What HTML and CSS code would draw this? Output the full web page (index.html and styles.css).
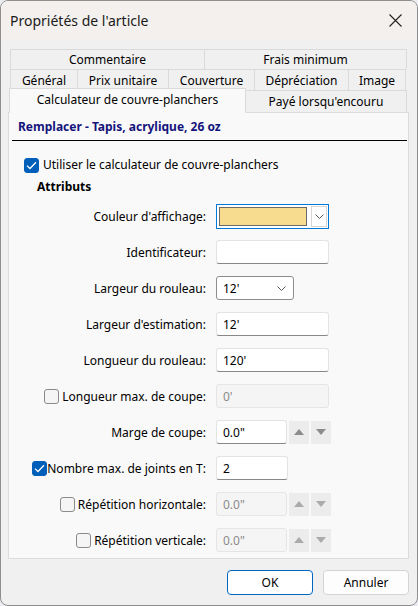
FILE: index.html
```html
<!DOCTYPE html>
<html lang="fr">
<head>
<meta charset="utf-8">
<title>Propriétés de l'article</title>
<link rel="stylesheet" href="styles.css">
</head>
<body>
<div class="window">
  <div class="titlebar">
    <span class="title">Propriétés de l'article</span>
    <svg class="close" width="13" height="13" viewBox="0 0 13 13"><path d="M0.5 0.5L12.5 12.5M12.5 0.5L0.5 12.5" stroke="#222" stroke-width="1.1" fill="none"/></svg>
  </div>
  <div class="content">
    <div class="tabs">
      <div class="tabrow r1">
        <div class="tab" style="width:195px">Commentaire</div>
        <div class="tab" style="width:203px">Frais minimum</div>
      </div>
      <div class="tabrow r2">
        <div class="tab" style="width:68px">Général</div>
        <div class="tab" style="width:92px">Prix unitaire</div>
        <div class="tab" style="width:87px">Couverture</div>
        <div class="tab" style="width:95px">Dépréciation</div>
        <div class="tab" style="width:58px">Image</div>
      </div>
      <div class="tabrow r3">
        <div class="tab active" style="width:237px">Calculateur de couvre-planchers</div>
        <div class="tab" style="width:162px">Payé lorsqu'encouru</div>
      </div>
    </div>
    <div class="panel">
      <div class="header">Remplacer - Tapis, acrylique, 26 oz</div>
      <div class="usecalc">
        <span class="cb checked"><svg width="11" height="9" viewBox="0 0 11 9"><path d="M1 4.6L4 7.5L10 1.3" stroke="#fff" stroke-width="1.3" fill="none"/></svg></span>
        <span>Utiliser le calculateur de couvre-planchers</span>
      </div>
      <div class="section">Attributs</div>
      <div class="form">
        <div class="label">Couleur d'affichage:</div>
        <div class="ctl">
          <div class="colorcombo"><span class="swatch"></span><span class="ddbtn"><svg width="9" height="5" viewBox="0 0 9 5"><path d="M0.5 0.5L4.5 4.5L8.5 0.5" stroke="#555" fill="none"/></svg></span></div>
        </div>

        <div class="label">Identificateur:</div>
        <div class="ctl"><div class="input w113"></div></div>

        <div class="label">Largeur du rouleau:</div>
        <div class="ctl"><div class="combo">12'<svg width="9" height="5" viewBox="0 0 9 5"><path d="M0.5 0.5L4.5 4.5L8.5 0.5" stroke="#555" fill="none"/></svg></div></div>

        <div class="label">Largeur d'estimation:</div>
        <div class="ctl"><div class="input w113">12'</div></div>

        <div class="label">Longueur du rouleau:</div>
        <div class="ctl"><div class="input w113">120'</div></div>

        <div class="label"><span class="cb"></span><span>Longueur max. de coupe:</span></div>
        <div class="ctl"><div class="input w113 disabled">0'</div></div>

        <div class="label">Marge de coupe:</div>
        <div class="ctl spinrow">
          <div class="input w71">0.0"</div>
          <span class="spin"><svg width="10" height="6" viewBox="0 0 10 6"><path d="M0 6L5 0L10 6Z" fill="#8c8c8c"/></svg></span>
          <span class="spin"><svg width="10" height="6" viewBox="0 0 10 6"><path d="M0 0L10 0L5 6Z" fill="#8c8c8c"/></svg></span>
        </div>

        <div class="label"><span class="cb checked tight"><svg width="11" height="9" viewBox="0 0 11 9"><path d="M1 4.6L4 7.5L10 1.3" stroke="#fff" stroke-width="1.3" fill="none"/></svg></span><span>Nombre max. de joints en T:</span></div>
        <div class="ctl"><div class="input w72">2</div></div>

        <div class="label"><span class="cb"></span><span>Répétition horizontale:</span></div>
        <div class="ctl spinrow">
          <div class="input w71 disabled">0.0"</div>
          <span class="spin"><svg width="10" height="6" viewBox="0 0 10 6"><path d="M0 6L5 0L10 6Z" fill="#ababab"/></svg></span>
          <span class="spin"><svg width="10" height="6" viewBox="0 0 10 6"><path d="M0 0L10 0L5 6Z" fill="#ababab"/></svg></span>
        </div>

        <div class="label"><span class="cb"></span><span>Répétition verticale:</span></div>
        <div class="ctl spinrow">
          <div class="input w71 disabled">0.0"</div>
          <span class="spin"><svg width="10" height="6" viewBox="0 0 10 6"><path d="M0 6L5 0L10 6Z" fill="#ababab"/></svg></span>
          <span class="spin"><svg width="10" height="6" viewBox="0 0 10 6"><path d="M0 0L10 0L5 6Z" fill="#ababab"/></svg></span>
        </div>
      </div>
    </div>
    <div class="buttons">
      <button class="btn default">OK</button>
      <button class="btn">Annuler</button>
    </div>
  </div>
</div>
</body>
</html>
```
FILE: styles.css
```css
* { box-sizing: border-box; }
html, body { margin: 0; padding: 0; }
body {
  background: #eeedf3;
  font-family: "Segoe UI", "Noto Sans", sans-serif;
  font-size: 12px;
  color: #000;
}
.window {
  width: 418px;
  height: 606px;
  border: 1px solid #8e8e8e;
  border-radius: 8px;
  overflow: hidden;
  background: #f0f0f0;
  display: flex;
  flex-direction: column;
}
.titlebar {
  height: 39px;
  background: #f4f0ed;
  display: flex;
  align-items: center;
  justify-content: space-between;
  padding: 0 15px 0 9px;
}
.title { font-size: 14px; color: #1a1a1a; }
.close { display: block; }
.content {
  padding: 9px 8px 0 7px;
  display: flex;
  flex-direction: column;
}
.tabs { display: flex; flex-direction: column; }
.tabrow { display: flex; }
.tabrow.r1, .tabrow.r2 { margin: 0 2px; }
.tabrow.r1 { height: 20px; }
.tabrow.r2 { height: 21px; }
.tabrow.r3 { height: 22px; margin: 0 2px 0 1px; position: relative; z-index: 2; }
.tab {
  border: 1px solid #dadada;
  border-bottom: none;
  background: #f0f0f0;
  display: flex;
  align-items: center;
  justify-content: center;
  white-space: nowrap;
  color: #000;
}
.tab + .tab { margin-left: -1px; }
.r3 .tab { align-self: flex-end; height: 22px; padding-bottom: 1px; }
.r3 .tab.active {
  height: 25px;
  margin-top: -2px;
  margin-bottom: -1px;
  background: #f9f9f9;
  align-self: auto;
  padding-bottom: 4px;
}
.panel {
  height: 447px;
  border: 1px solid #dcdcdc;
  background: #f9f9f9;
  display: flex;
  flex-direction: column;
}
.header {
  margin: 0 1px 0 3px;
  padding: 6px 0 5px 6px;
  line-height: 16px;
  font-weight: bold;
  color: #14147c;
  border-bottom: 1px solid #000;
}
.usecalc {
  margin: 16px 0 0 15px;
  display: flex;
  align-items: center;
  gap: 4px;
  line-height: 16px;
}
.section {
  margin: 6px 0 0 28px;
  font-weight: bold;
  line-height: 16px;
}
.cb {
  width: 15px;
  height: 15px;
  border: 1px solid #8b8b8b;
  border-radius: 3px;
  background: #f5f5f5;
  display: inline-flex;
  align-items: center;
  justify-content: center;
  flex: none;
}
.cb.checked { background: #005fb8; border-color: #005fb8; }
.form {
  margin-top: 9px;
  display: grid;
  grid-template-columns: 197px auto;
  column-gap: 10px;
  row-gap: 12px;
  grid-auto-rows: 24px;
}
.label {
  display: flex;
  align-items: center;
  justify-content: flex-end;
  gap: 3px;
  white-space: nowrap;
}
.label .cb.tight { margin-right: -3px; }
.ctl { display: flex; align-items: center; }
.input {
  height: 24px;
  background: #fff;
  border: 1px solid #e3e3e3;
  border-bottom-color: #878787;
  border-radius: 3px;
  padding-left: 6px;
  display: flex;
  align-items: center;
}
.input.disabled { background: #f5f5f5; border-color: #e5e5e5; color: #8a8a8a; }
.w113 { width: 113px; }
.w71 { width: 71px; }
.w72 { width: 72px; }
.colorcombo {
  width: 113px;
  height: 25px;
  border: 1px solid #0078d4;
  background: #fff;
  display: flex;
  align-items: center;
  padding: 0 1px 0 2px;
}
.swatch {
  width: 88px;
  height: 19px;
  background: #f7dc8f;
  border: 1px solid #6b6b6b;
}
.ddbtn {
  margin-left: auto;
  width: 16px;
  height: 21px;
  border: 1px solid #d6d6d6;
  background: #fff;
  display: flex;
  align-items: center;
  justify-content: center;
}
.combo {
  width: 78px;
  height: 24px;
  border: 1px solid #8d8d8d;
  border-radius: 3px;
  background: #fff;
  display: flex;
  align-items: center;
  justify-content: space-between;
  padding: 0 7px 0 6px;
}
.spinrow { gap: 2px; }
.spin {
  width: 20px;
  height: 23px;
  background: #ececec;
  display: flex;
  align-items: center;
  justify-content: center;
}
.spinrow .input { height: 24px; }
.buttons {
  margin-top: 11px;
  display: flex;
  justify-content: flex-end;
  gap: 10px;
}
.btn {
  width: 86px;
  height: 25px;
  font-family: inherit;
  font-size: 12px;
  color: #000;
  background: #fdfdfd;
  border: 1px solid #d4d4d4;
  border-radius: 4px;
  padding: 0;
}
.btn.default { border-color: #0067c0; background: #fff; }
```
